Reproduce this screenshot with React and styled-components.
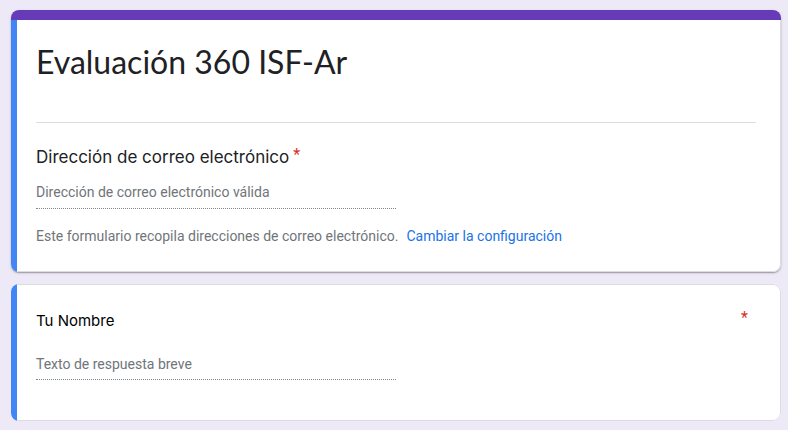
import React from "react";
import styled, { createGlobalStyle } from "styled-components";

const GlobalStyle = createGlobalStyle`
  *, *::before, *::after { box-sizing: border-box; }
  body {
    margin: 0;
    background: #eee9f7;
    font-family: Roboto, sans-serif;
    font-size: 14px;
    line-height: 20px;
    color: #202124;
  }
`;

const Page = styled.main`
  display: flex;
  flex-direction: column;
  gap: 12px;
  padding: 10px 7px 9px 11px;
`;

const Card = styled.section`
  overflow: hidden;
  background: #fff;
  border-radius: 8px;
  box-shadow: ${({ $raised }) =>
    $raised
      ? "0 1px 1px rgba(0, 0, 0, 0.24), 0 1px 3px rgba(0, 0, 0, 0.16)"
      : "none"};
`;

const ThemeBar = styled.div`
  height: 10px;
  background: #673ab7;
`;

const CardContent = styled.div`
  display: grid;
  grid-template-columns: 6px minmax(0, 1fr);
`;

const Rail = styled.div`
  background: #4285f4;
`;

const CardBody = styled.div`
  display: flex;
  flex-direction: column;
  padding: ${({ $joined }) => ($joined ? "22px 24px 25px 19px" : "23px 24px 40px 19px")};
  border: 1px solid #dadce0;
  border-left: 0;
  border-top-width: ${({ $joined }) => ($joined ? "0" : "1px")};
  border-radius: ${({ $joined }) => ($joined ? "0 0 8px 0" : "0 8px 8px 0")};
`;

const Title = styled.h1`
  margin: 0 0 22px;
  padding-bottom: 40px;
  border-bottom: 1px solid #dadce0;
  font: 400 32px/40px Lato, sans-serif;
`;

const QuestionHeader = styled.div`
  display: flex;
  align-items: flex-start;
  justify-content: ${({ $spread }) => ($spread ? "space-between" : "flex-start")};
  gap: 4px;
  padding-right: ${({ $spread }) => ($spread ? "8px" : "0")};
`;

const Label = styled.label`
  font-family: Inter, sans-serif;
  font-size: ${({ $large }) => ($large ? "17px" : "15px")};
  line-height: ${({ $large }) => ($large ? "24px" : "26px")};
  color: ${({ $large }) => ($large ? "#202124" : "#000")};
`;

const Required = styled.span`
  font-size: 16px;
  line-height: 20px;
  color: #d93025;
`;

const Answer = styled.input`
  width: 50%;
  height: 27px;
  margin-top: ${({ $spaced }) => ($spaced ? "19px" : "13px")};
  padding: 0 0 ${({ $spaced }) => ($spaced ? "4px" : "6px")};
  border: 0;
  border-bottom: 1px dotted #80868b;
  border-radius: 0;
  outline: 0;
  background: transparent;
  font: inherit;
  color: #202124;

  &::placeholder {
    color: #70757a;
    opacity: 1;
  }
`;

const Notice = styled.p`
  display: flex;
  flex-wrap: wrap;
  gap: 8px;
  margin: 17px 0 0;
  color: #70757a;
`;

const SettingsLink = styled.a`
  color: #1a73e8;
  text-decoration: none;
`;

export default function App() {
  return (
    <>
      <GlobalStyle />
      <Page>
        <Card $raised>
          <ThemeBar />
          <CardContent>
            <Rail />
            <CardBody $joined>
              <Title>Evaluación 360 ISF-Ar</Title>
              <QuestionHeader>
                <Label htmlFor="email" $large>
                  Dirección de correo electrónico
                </Label>
                <Required>*</Required>
              </QuestionHeader>
              <Answer
                id="email"
                type="email"
                placeholder="Dirección de correo electrónico válida"
                required
              />
              <Notice>
                Este formulario recopila direcciones de correo electrónico.
                <SettingsLink href="#configuracion">Cambiar la configuración</SettingsLink>
              </Notice>
            </CardBody>
          </CardContent>
        </Card>

        <Card>
          <CardContent>
            <Rail />
            <CardBody>
              <QuestionHeader $spread>
                <Label htmlFor="name">Tu Nombre</Label>
                <Required>*</Required>
              </QuestionHeader>
              <Answer
                id="name"
                type="text"
                placeholder="Texto de respuesta breve"
                required
                $spaced
              />
            </CardBody>
          </CardContent>
        </Card>
      </Page>
    </>
  );
}
